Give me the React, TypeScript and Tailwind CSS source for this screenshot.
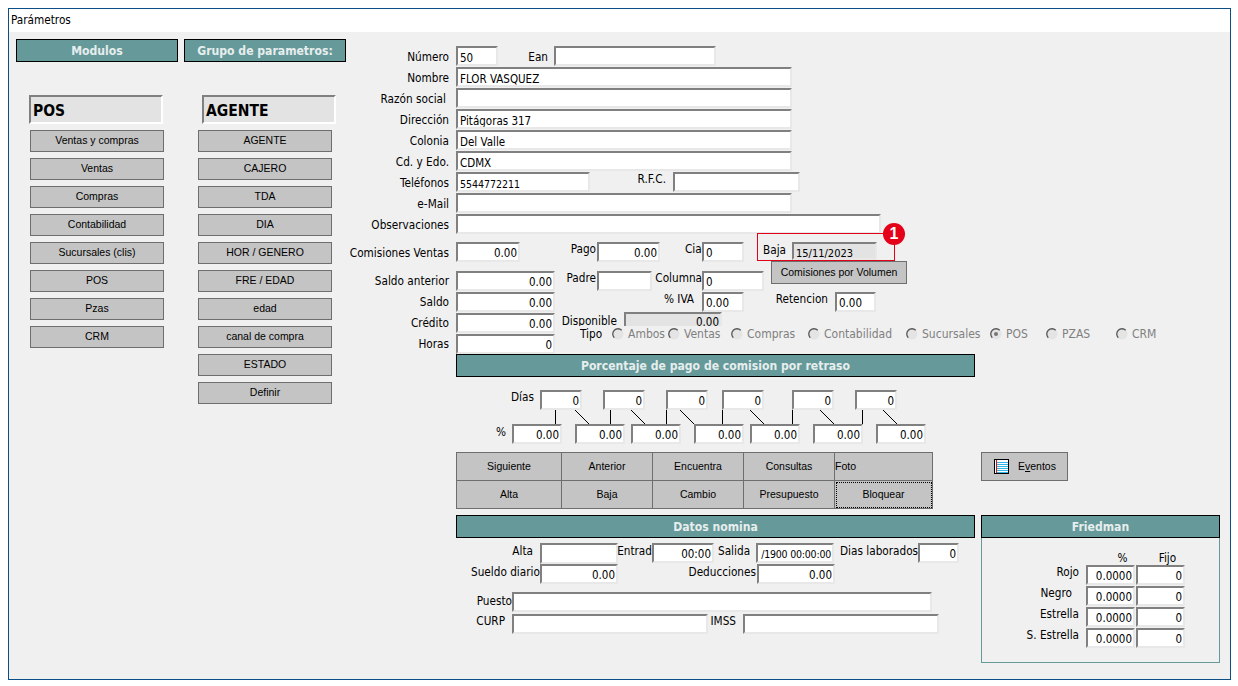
import React from "react";
import clsx from "clsx";

const ui = "font-['DejaVu_Sans_Condensed','DejaVu_Sans',sans-serif] [font-stretch:condensed]";
const btnFont = "font-['Liberation_Sans',Arial,sans-serif] text-[10.5px] [font-stretch:normal]";
const topLabel = "mr-[7px] mt-px w-[103px]";

function Field({ w, right, gray, h, tall, flush, children, className }: { w: string; right?: boolean; gray?: boolean; h?: string; tall?: boolean; flush?: boolean; children?: React.ReactNode; className?: string }) {
  return (
    <div
      className={clsx(
        "shrink-0 overflow-hidden whitespace-nowrap border-2 border-t-[#808080] border-l-[#808080] border-r-[#e8e8e8] border-b-[#e8e8e8] pl-[2px] pr-px text-[11.5px] leading-4 text-black",
        w,
        h ?? "h-5",
        flush ? "" : tall ? "pt-[2px]" : "pt-px",
        right ? "text-right" : "text-left",
        gray ? "bg-[#e3e3e3]" : "bg-white",
        className
      )}
    >
      {children}
    </div>
  );
}

function Label({ className, children }: { className: string; children: React.ReactNode }) {
  return <div className={clsx("h-5 shrink-0 whitespace-nowrap text-right text-[11.7px] leading-5 text-black", className)}>{children}</div>;
}

function Row({ className, children }: { className?: string; children: React.ReactNode }) {
  return <div className={clsx("flex h-[21px] items-start", className)}>{children}</div>;
}

function Header({ className, children }: { className: string; children: React.ReactNode }) {
  return <div className={clsx("flex h-[23px] items-center justify-center border border-black bg-[#669999] pt-px text-[12.1px] font-bold text-[#e6eeee]", className)}>{children}</div>;
}

function Btn({ children, className }: { children: React.ReactNode; className?: string }) {
  return <div className={clsx("flex h-[22px] w-[134px] items-center justify-center border border-[#6e6e6e] bg-[#c4c4c4] pb-px text-black", btnFont, className)}>{children}</div>;
}

function Radio({ w, on, children }: { w: string; on?: boolean; children: React.ReactNode }) {
  return (
    <div className={clsx("flex h-[15px] shrink-0 items-center", w)}>
      <svg width="12" height="12" viewBox="0 0 12 12" className="mr-1 shrink-0">
        <circle cx="6" cy="6" r="5.5" fill="#e4e4e4" />
        <path d="M9.7 2.3A5 5 0 0 0 2.3 9.7" fill="none" stroke="#555" strokeWidth="1.3" />
        {on && <circle cx="6" cy="6" r="2" fill="#777" />}
      </svg>
      <span className="text-[12px] leading-4 text-[#808080]">{children}</span>
    </div>
  );
}

const modulos = ["Ventas y compras", "Ventas", "Compras", "Contabilidad", "Sucursales (clis)", "POS", "Pzas", "CRM"];
const grupos = ["AGENTE", "CAJERO", "TDA", "DIA", "HOR / GENERO", "FRE / EDAD", "edad", "canal de compra", "ESTADO", "Definir"];
const diasMargins = ["ml-[7px]", "ml-[21px]", "ml-[21px]", "ml-[14px]", "ml-[28px]", "ml-[21px]"];
const pctMargins = ["ml-[6px]", "ml-[13px]", "ml-[6px]", "ml-[13px]", "ml-[6px]", "ml-[13px]", "ml-[13px]"];
const toolbar = ["Siguiente", "Anterior", "Encuentra", "Consultas", "Foto", "Alta", "Baja", "Cambio", "Presupuesto", "Bloquear"];
const friedman = [
  { name: "Rojo", pr: "pr-0" },
  { name: "Negro", pr: "pr-[7px]" },
  { name: "Estrella", pr: "pr-0" },
  { name: "S. Estrella", pr: "pr-0" },
];

export default function App() {
  return (
    <div className={clsx("h-[686px] w-[1238px] bg-white pl-2 pt-2", ui)}>
      <div className="flex h-[672px] w-[1223px] flex-col border border-[#0b4f86]">
        <div className="h-[23px] shrink-0 bg-white pl-[2px] text-[11.7px] leading-[23px] text-black">Parámetros</div>
        <div className="flex flex-1 bg-[#f0f0f0]">
          {/* Left columns */}
          <div className="flex w-[337px] shrink-0 gap-[6px] pl-[7px] pt-[7px]">
            <div className="w-[162px]">
              <Header className="w-[162px]">Modulos</Header>
              <div className="ml-[13px] mt-[33px] h-[29px] w-[134px] border-2 border-t-[#808080] border-l-[#808080] border-r-white border-b-white bg-[#e3e3e3] pl-[2px] text-[15.5px] font-bold leading-[28px] text-black">POS</div>
              <div className="ml-[14px] mt-[6px] flex flex-col gap-[6px]">
                {modulos.map((m) => (
                  <Btn key={m}>{m}</Btn>
                ))}
              </div>
            </div>
            <div className="w-[162px]">
              <Header className="w-[162px]">Grupo de parametros:</Header>
              <div className="ml-[18px] mt-[33px] h-[29px] w-[134px] border-2 border-t-[#808080] border-l-[#808080] border-r-white border-b-white bg-[#e3e3e3] pl-[2px] text-[15.5px] font-bold leading-[28px] text-black">AGENTE</div>
              <div className="ml-[14px] mt-[6px] flex flex-col gap-[6px]">
                {grupos.map((m) => (
                  <Btn key={m}>{m}</Btn>
                ))}
              </div>
            </div>
          </div>

          {/* Form */}
          <div className="flex min-w-0 flex-1 flex-col pt-[14px]">
            <Row>
              <Label className={topLabel}>Número</Label>
              <Field w="w-[42px]" tall>50</Field>
              <Label className="ml-[29px] mt-px w-[21px]">Ean</Label>
              <Field w="ml-[6px] w-[162px]" />
            </Row>
            <Row>
              <Label className={topLabel}>Nombre</Label>
              <Field w="w-[336px]" tall>FLOR VASQUEZ</Field>
            </Row>
            <Row>
              <Label className={clsx(topLabel, "pr-[3px]")}>Razón social</Label>
              <Field w="w-[336px]" />
            </Row>
            <Row>
              <Label className={topLabel}>Dirección</Label>
              <Field w="w-[336px]" tall>Pitágoras 317</Field>
            </Row>
            <Row>
              <Label className={topLabel}>Colonia</Label>
              <Field w="w-[336px]" tall>Del Valle</Field>
            </Row>
            <Row>
              <Label className={topLabel}>Cd. y Edo.</Label>
              <Field w="w-[336px]" tall>CDMX</Field>
            </Row>
            <Row>
              <Label className={topLabel}>Teléfonos</Label>
              <Field w="w-[134px]" tall>
                <span className="text-[10.5px]">5544772211</span>
              </Field>
              <Label className="ml-[46px] -mt-[3px] w-[30px]">R.F.C.</Label>
              <Field w="ml-[7px] w-[127px]" />
            </Row>
            <Row>
              <Label className={topLabel}>e-Mail</Label>
              <Field w="w-[336px]" />
            </Row>
            <Row>
              <Label className={topLabel}>Observaciones</Label>
              <Field w="w-[425px]" />
            </Row>

            {/* Comisiones */}
            <div className="relative mt-[7px] flex h-[29px] items-start">
              <Label className={topLabel}>Comisiones Ventas</Label>
              <Field w="w-[64px]" right className="pr-[2px]">0.00</Field>
              <Label className="ml-[49px] -mt-[3px] w-[27px]">Pago</Label>
              <Field w="ml-px w-[63px]" right className="pr-[2px]">0.00</Field>
              <Label className="ml-[25px] -mt-[3px] w-4">Cia</Label>
              <Field w="ml-px w-[42px]">0</Field>
              <Label className="ml-[19px] -mt-[2px] w-[22px]">Baja</Label>
              <Field w="ml-[7px] w-[85px]" h="h-[18px]" gray>
                <span className="text-[11px]">15/11/2023</span>
              </Field>
              <div className="absolute left-[411px] top-[-9px] h-[28px] w-[138px] border border-[#e5001a]" />
              <div className="absolute left-[537px] top-[-19px] flex h-[22px] w-[22px] items-center justify-center rounded-full bg-[#e5001a] font-['Liberation_Sans',Arial,sans-serif] text-[16px] font-bold leading-none text-white [font-stretch:normal]">1</div>
            </div>

            {/* Saldos */}
            <div className="flex h-[83px] items-start">
              <div className="w-[209px] shrink-0">
                <Row>
                  <Label className="mr-[7px] w-[103px]">Saldo anterior</Label>
                  <Field w="w-[99px]" right>0.00</Field>
                </Row>
                <Row>
                  <Label className="mr-[7px] w-[103px]">Saldo</Label>
                  <Field w="w-[99px]" right>0.00</Field>
                </Row>
                <Row>
                  <Label className="mr-[7px] w-[103px]">Crédito</Label>
                  <Field w="w-[99px]" right>0.00</Field>
                </Row>
                <div className="flex h-5 items-start">
                  <Label className="mr-[7px] w-[103px]">Horas</Label>
                  <Field w="w-[99px]" right>0</Field>
                </div>
              </div>
              <div className="min-w-0 flex-1">
                <div className="flex h-[21px] items-start">
                  <Label className="ml-[11px] -mt-[3px] w-[30px]">Padre</Label>
                  <Field w="ml-px w-[55px]" />
                  <Label className="ml-px -mt-[3px] w-[49px]">Columna</Label>
                  <Field w="ml-0 w-[62px]">0</Field>
                  <div className={clsx("-mt-[10px] ml-[7px] flex h-[23px] w-[136px] shrink-0 items-center justify-center border border-[#6e6e6e] bg-[#c4c4c4] text-black", btnFont)}>Comisiones por Volumen</div>
                </div>
                <div className="flex h-5 items-start">
                  <Label className="ml-[109px] -mt-[3px] w-[30px]">% IVA</Label>
                  <Field w="ml-[8px] w-[42px]">0.00</Field>
                  <Label className="ml-[30px] -mt-[3px] w-[54px]">Retencion</Label>
                  <Field w="ml-[7px] w-[41px]">0.00</Field>
                </div>
                <div className="flex h-[14px] items-start overflow-hidden">
                  <Label className="ml-[6px] -mt-px w-[56px]">Disponible</Label>
                  <Field w="ml-[7px] w-[98px]" gray right flush>0.00</Field>
                </div>
                <div className="flex h-[15px] items-center">
                  <Label className="ml-[25px] w-[32px] pr-[10px]">Tipo</Label>
                  <Radio w="w-[56px]">Ambos</Radio>
                  <Radio w="w-[63px]">Ventas</Radio>
                  <Radio w="w-[77px]">Compras</Radio>
                  <Radio w="w-[98px]">Contabilidad</Radio>
                  <Radio w="w-[84px]">Sucursales</Radio>
                  <Radio w="w-[56px]" on>POS</Radio>
                  <Radio w="w-[70px]">PZAS</Radio>
                  <Radio w="w-[50px]">CRM</Radio>
                </div>
              </div>
            </div>

            {/* Lower part */}
            <div className="pl-[110px]">
              <Header className="w-[519px]">Porcentaje de pago de comision por retraso</Header>
              <div className="mt-[13px] flex h-5 items-start">
                <Label className="ml-[55px] -mt-[3px] w-[22px]">Días</Label>
                {diasMargins.map((m, i) => (
                  <Field key={i} w={clsx(m, "w-[42px]")} right className="pr-[2px]">0</Field>
                ))}
              </div>
              <svg width="519" height="14" className="block" viewBox="0 0 519 14">
                {[99, 154, 210, 266, 336, 406].map((x) => (
                  <line key={x} x1={x + 0.5} y1="0" x2={x + 0.5} y2="14" stroke="#000" />
                ))}
                {[119, 175, 224, 294, 364, 427].map((x) => (
                  <line key={x} x1={x} y1="0" x2={x + 14} y2="14" stroke="#000" />
                ))}
              </svg>
              <div className="flex h-5 items-start">
                <Label className="ml-[40px] -mt-[2px] w-[10px]">%</Label>
                {pctMargins.map((m, i) => (
                  <Field key={i} w={clsx(m, "w-[50px]")} right className="pr-[2px]">0.00</Field>
                ))}
              </div>
              <div className="mt-2 flex items-start">
                <div className={clsx("grid h-[57px] w-[477px] shrink-0 grid-cols-[105px_91px_91px_91px_98px] grid-rows-2 border-l border-t border-[#6e6e6e] bg-[#c4c4c4] text-black", btnFont)}>
                  {toolbar.map((t) => (
                    <div
                      key={t}
                      className={clsx(
                        "flex items-center border-b border-r border-[#6e6e6e]",
                        t === "Foto" ? "justify-start" : "justify-center",
                        t === "Bloquear" && "outline-1 -outline-offset-2 outline-dotted outline-black"
                      )}
                    >
                      {t}
                    </div>
                  ))}
                </div>
                <div className={clsx("ml-[48px] flex h-[29px] w-[87px] shrink-0 items-center border border-[#6e6e6e] bg-[#c4c4c4] pl-3 text-black", btnFont)}>
                  <svg width="15" height="15" viewBox="0 0 15 15" className="mr-[9px] shrink-0">
                    <rect x="0.5" y="0.5" width="14" height="14" fill="#fff" stroke="#000" />
                    <path d="M3 3.5h11M3 5.5h11M3 7.5h11M3 9.5h11M3 11.5h11M3 13.5h11" stroke="#33b5e5" />
                    <path d="M2.5 1v13" stroke="#e01010" />
                  </svg>
                  <span>
                    E<span className="underline">v</span>entos
                  </span>
                </div>
              </div>

              <div className="mt-[6px] flex gap-[6px]">
                <div className="w-[519px] shrink-0">
                  <Header className="w-[519px]">Datos nomina</Header>
                  <div className="mt-[5px] flex h-[21px] items-start">
                    <Label className="ml-[56px] -mt-[2px] w-[21px]">Alta</Label>
                    <Field w="ml-[7px] w-[78px]" h="h-[21px]" />
                    <Label className="-ml-[2px] -mt-[2px] w-[36px]">Entrad</Label>
                    <Field w="w-[62px]" right className="pr-[2px]">00:00</Field>
                    <Label className="ml-[4px] -mt-[2px] w-[31px]">Salida</Label>
                    <Field w="ml-[7px] w-[78px]" right>
                      <span className="tracking-[-0.2px] text-[10.5px]">/1900 00:00:00</span>
                    </Field>
                    <Label className="ml-[6px] -mt-[2px] w-[77px]">Dias laborados</Label>
                    <Field w="ml-px w-[41px]" right className="pr-[2px]">0</Field>
                  </div>
                  <div className="flex h-[21px] items-start">
                    <Label className="ml-[15px] -mt-[2px] w-[68px]">Sueldo diario</Label>
                    <Field w="ml-px w-[78px]" right>0.00</Field>
                    <Label className="ml-[70px] -mt-[2px] w-[68px]">Deducciones</Label>
                    <Field w="ml-px w-[78px]" right>0.00</Field>
                  </div>
                  <div className="mt-[7px] flex h-[22px] items-start">
                    <Label className="ml-[20px] -mt-px w-[36px]">Puesto</Label>
                    <Field w="w-[420px]" />
                  </div>
                  <div className="flex h-5 items-start">
                    <Label className="ml-[20px] -mt-[3px] w-[29px]">CURP</Label>
                    <Field w="ml-[7px] w-[196px]" />
                    <Label className="ml-[2px] -mt-[3px] w-[26px]">IMSS</Label>
                    <Field w="ml-[7px] w-[196px]" />
                  </div>
                </div>
                <div className="w-[239px] shrink-0">
                  <Header className="w-[239px]">Friedman</Header>
                  <div className="h-[125px] border border-t-0 border-[#669999] pt-[14px]">
                    <div className="flex h-[13px] text-[11.7px] leading-[13px] text-black">
                      <div className="ml-[104px] w-[49px] pl-[24px] text-center">%</div>
                      <div className="w-[49px] pl-[16px] text-center">Fijo</div>
                    </div>
                    {friedman.map((r) => (
                      <Row key={r.name}>
                        <Label className={clsx("-mt-[3px] mr-[7px] w-[97px]", r.pr)}>{r.name}</Label>
                        <Field w="w-[49px]" right>0.0000</Field>
                        <Field w="ml-px w-[49px]" right className="pr-[2px]">0</Field>
                      </Row>
                    ))}
                  </div>
                </div>
              </div>
            </div>
          </div>
        </div>
      </div>
    </div>
  );
}
